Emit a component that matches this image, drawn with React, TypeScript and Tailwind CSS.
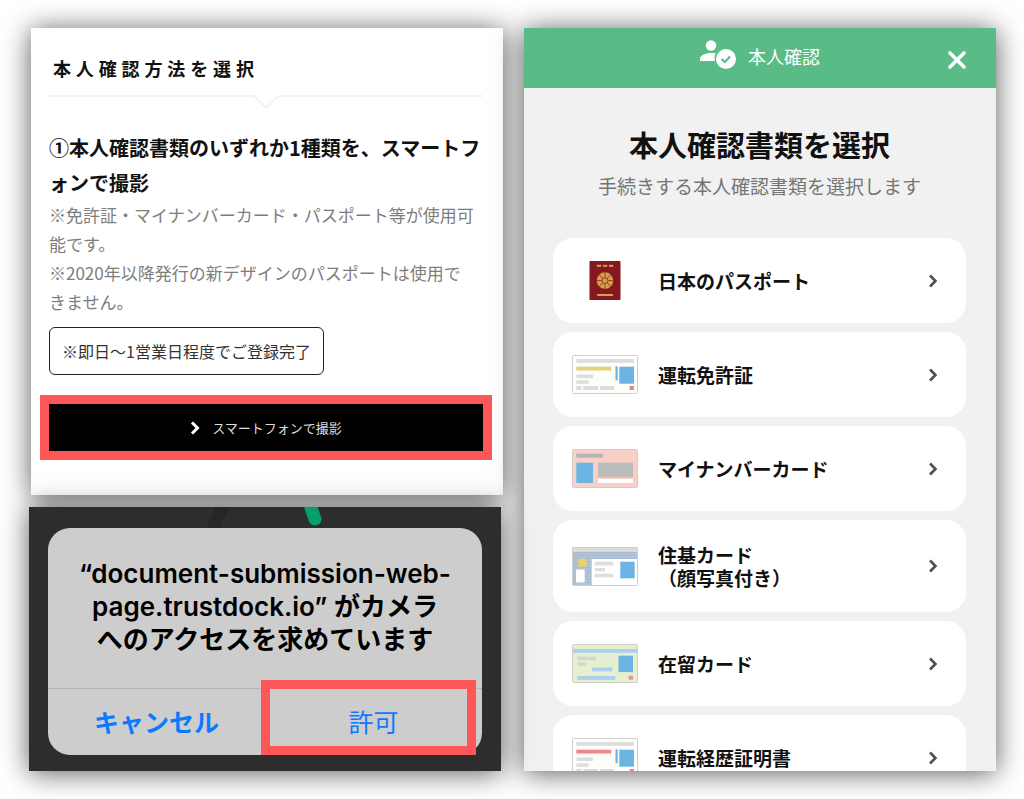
import type { ReactNode } from "react";

type TCardArt = { children: ReactNode; fill: string };

function CardArt({ children, fill }: TCardArt) {
  return (
    <svg
      viewBox="0 0 66 39"
      className="w-[66px] h-[39px] shrink-0"
      aria-hidden="true"
    >
      <rect x="0.5" y="0.5" width="65" height="38" rx="1" fill={fill} />
      {children}
      <rect
        x="0.5"
        y="0.5"
        width="65"
        height="38"
        rx="1"
        fill="none"
        stroke="#cfcfca"
      />
    </svg>
  );
}

function PassportArt() {
  const petals = [0, 45, 90, 135, 180, 225, 270, 315];
  return (
    <svg
      viewBox="0 0 66 39"
      className="w-[66px] h-[39px] shrink-0"
      aria-hidden="true"
    >
      <rect x="17.5" width="31" height="39" rx="0.8" fill="#84171f" />
      <g fill="#d3a04b">
        <rect x="24.7" y="3.8" width="4.6" height="2" />
        <rect x="31" y="3.8" width="4.3" height="2" />
        <rect x="37" y="3.8" width="4.4" height="2" />
        <rect x="24.9" y="33" width="16.4" height="2" rx="1" />
        <circle cx="33" cy="19.6" r="8.3" />
      </g>
      <g stroke="#84171f" strokeWidth="0.7" fill="none">
        <circle cx="33" cy="19.6" r="2.9" />
        {petals.map((angle) => (
          <path
            key={angle}
            d="M33 16.6V11"
            transform={`rotate(${angle} 33 19.6)`}
          />
        ))}
      </g>
    </svg>
  );
}

function LicenseArt({ accent }: { accent: string }) {
  return (
    <CardArt fill="#fdfdfa">
      <g fill="#dddddb">
        <rect x="4.3" y="4" width="57.5" height="3.8" />
        <rect x="4.3" y="19.5" width="16.7" height="3.5" />
        <rect x="4.3" y="25.3" width="12.3" height="3.5" />
        <rect x="4.3" y="31" width="5" height="4" />
        <rect x="11.3" y="31" width="14.7" height="4" />
        <rect x="28" y="31" width="14" height="4" />
      </g>
      <rect x="4.3" y="11.7" width="35" height="3.8" fill={accent} />
      <rect x="43.5" y="11.3" width="2.2" height="14" fill="#6cb4e2" />
      <rect x="47.3" y="11.7" width="14.7" height="17" fill="#6cb4e2" />
      <rect x="57.7" y="31" width="4.2" height="4" fill="#e98189" />
    </CardArt>
  );
}

function MyNumberArt() {
  return (
    <CardArt fill="#f9d0c8">
      <rect x="4.3" y="4.7" width="26.7" height="4" fill="#b5b5b5" />
      <rect x="4.3" y="13.7" width="16.7" height="20.3" fill="#6cb4e2" />
      <rect x="26" y="13.7" width="35" height="14.7" fill="#bbbbbb" />
      <rect x="26" y="30" width="35" height="4" fill="#fff" />
    </CardArt>
  );
}

function JukiArt() {
  const stripes = [7, 10, 13, 16, 19, 22, 25, 28, 31, 34, 37];
  return (
    <CardArt fill="#a6bdd5">
      {stripes.map((y) => (
        <path key={y} d={`M0 ${y}H66`} stroke="#b9c8d8" />
      ))}
      <rect width="66" height="5" fill="#dcdcd6" />
      <rect x="19.7" y="12" width="45.8" height="26.5" fill="#fff" />
      <rect x="6.3" y="11.7" width="8.3" height="8" fill="#ecd069" />
      <rect x="4" y="22.5" width="8.7" height="13" rx="1" fill="#fff" />
      <g fill="#dedede">
        <rect x="22.7" y="14.7" width="18.6" height="3.8" />
        <rect x="22.7" y="21" width="10.3" height="3.3" />
        <rect x="22.7" y="26.7" width="18.6" height="3.6" />
      </g>
      <rect x="48.3" y="14.7" width="14.4" height="16.6" fill="#6cb4e2" />
    </CardArt>
  );
}

function ResidenceArt() {
  return (
    <CardArt fill="#e4f0cf">
      <g fill="#abcfec">
        <rect y="5" width="66" height="3.8" />
        <rect x="20" y="23.5" width="20.3" height="3.8" />
        <rect x="5.3" y="32" width="38" height="3.8" />
      </g>
      <rect x="5.3" y="12.5" width="18.4" height="3.8" fill="#d3d9cc" />
      <rect x="5.3" y="18.4" width="9.4" height="3.6" fill="#d3d9cc" />
      <rect x="46.5" y="11.7" width="14.5" height="16.4" fill="#6cb4e2" />
      <rect x="56.7" y="31.7" width="4.3" height="4" fill="#e5959a" />
    </CardArt>
  );
}

const documents = [
  { id: 1, label: "日本のパスポート", art: <PassportArt /> },
  { id: 2, label: "運転免許証", art: <LicenseArt accent="#e3d27c" /> },
  { id: 3, label: "マイナンバーカード", art: <MyNumberArt /> },
  { id: 4, label: "住基カード", note: "（顔写真付き）", art: <JukiArt /> },
  { id: 5, label: "在留カード", art: <ResidenceArt /> },
  { id: 6, label: "運転経歴証明書", art: <LicenseArt accent="#f0868d" /> },
];

function Chevron({ className }: { className: string }) {
  return (
    <svg viewBox="0 0 10 14" className={className} aria-hidden="true">
      <path d="M2 1.5L7.5 7L2 12.5" fill="none" stroke="currentColor" />
    </svg>
  );
}

function MethodPanel() {
  return (
    <section className="ml-0.5 bg-white pl-[18px] pr-5 pt-6 pb-[35px] shadow-[0_2px_26px_rgba(0,0,0,0.65)]">
      <h2 className="pl-1 text-lg leading-8 font-bold tracking-[0.27em]">
        本人確認方法を選択
      </h2>
      <div className="flex mt-[11px]">
        <div className="flex-1 h-0.5 bg-[#eff5f5]" />
        <svg viewBox="0 0 28 14" className="w-7 h-3.5" aria-hidden="true">
          <path d="M0 1H1.5L14 12.5L26.5 1H28" fill="none" stroke="#eff5f5" strokeWidth="2" />
        </svg>
        <div className="flex-1 h-0.5 bg-[#eff5f5]" />
      </div>
      <h3 className="mt-[21px] text-xl leading-[35px] font-bold">
        ①本人確認書類のいずれか1種類を、スマートフォンで撮影
      </h3>
      <p className="text-[17px] leading-[29px] text-[#7d7d7d]">
        ※免許証・マイナンバーカード・パスポート等が使用可能です。
        <br />
        ※2020年以降発行の新デザインのパスポートは使用で
        <br />
        きません。
      </p>
      <p className="inline-block mt-[11px] px-3 py-[11px] border border-[#222] rounded-md text-base leading-6 text-[#333]">
        ※即日～1営業日程度でご登録完了
      </p>
      <div className="mt-5 -mx-[9px] border-[9px] border-[#fe5757]">
        <button
          type="button"
          className="flex items-center justify-center w-full gap-3 bg-black h-[47px] text-[13px] text-[#ddd]"
        >
          <Chevron className="w-2.5 h-3.5 text-white stroke-3" />
          スマートフォンで撮影
        </button>
      </div>
    </section>
  );
}

function CameraAlert() {
  return (
    <section className="relative flex-1 mr-0.5 bg-[#2d2d2d] px-[19px] pt-[21px] pb-4 shadow-[0_2px_26px_rgba(0,0,0,0.65)]">
      <svg
        viewBox="0 0 120 24"
        className="absolute top-0 w-[120px] h-6 left-[178px]"
        aria-hidden="true"
      >
        <path d="M6 24Q9 8 20 -4" fill="none" stroke="#262626" strokeWidth="12" />
        <path d="M102 -6Q105 4 108 12" fill="none" stroke="#049f6a" strokeWidth="13" strokeLinecap="round" />
      </svg>
      <div
        role="alertdialog"
        aria-labelledby="camera-title"
        className="relative flex flex-col h-full bg-[#cdcdcd] rounded-[22px]"
      >
        <p
          id="camera-title"
          className="flex-1 pt-[29px] text-[26px] leading-[33px] font-semibold text-center text-black font-['Inter','Noto_Sans_CJK_JP',sans-serif]"
        >
          “document-submission-web-
          <br />
          page.trustdock.io” がカメラ
          <br />
          へのアクセスを求めています
        </p>
        <div className="grid grid-cols-2 border-t border-[#b4b4b4] text-[25px] text-[#0a7aff]">
          <button type="button" className="font-bold h-[66px]">
            キャンセル
          </button>
          <div className="relative">
            <button type="button" className="w-full h-[66px]">
              許可
            </button>
            <span className="absolute -top-[9px] bottom-0 -left-1 right-1.5 border-[9px] border-[#fe5757] pointer-events-none" />
          </div>
        </div>
      </div>
    </section>
  );
}

function DocumentPanel() {
  return (
    <section className="min-h-0 overflow-hidden bg-[#f1f1f1]">
      <header className="relative flex items-center justify-center h-[60px] gap-3 bg-[#59bb85] text-white">
        <svg viewBox="0 0 36 29" className="mb-2 w-9 h-[29px]" aria-hidden="true">
          <circle cx="11" cy="5.5" r="5.2" fill="#fff" />
          <path d="M0 21V18.5C0 15 6 13 12 13H15.8C14.5 15.5 14.2 18.5 15 21Z" fill="#fff" />
          <circle cx="26" cy="19" r="10" fill="#fff" />
          <path d="M21.5 19L24.8 22L30 16.5" fill="none" stroke="#59bb85" strokeWidth="2" />
        </svg>
        <span className="pb-1 text-lg">本人確認</span>
        <button
          type="button"
          aria-label="閉じる"
          className="absolute right-[29px] top-[22px]"
        >
          <svg viewBox="0 0 20 20" className="w-5 h-5" aria-hidden="true">
            <path d="M3 3L17 17M17 3L3 17" stroke="#fff" strokeWidth="3.6" strokeLinecap="round" />
          </svg>
        </button>
      </header>
      <div className="pl-[29px] pr-[30px] pt-9">
        <h1 className="text-[29px] leading-10 font-bold text-center">
          本人確認書類を選択
        </h1>
        <p className="mt-2 text-[19px] leading-7 text-center text-[#757575]">
          手続きする本人確認書類を選択します
        </p>
        <ul className="flex flex-col mt-[38px] gap-[9px]">
          {documents.map((item) => (
            <li key={item.id}>
              <button
                type="button"
                className="flex items-center w-full min-h-[85px] gap-5 pl-[19px] pr-7 py-[23px] text-left bg-white rounded-[20px]"
              >
                {item.art}
                <span className="flex-1 text-[19px] leading-[23px] font-bold text-[#111]">
                  {item.label}
                  {item.note && <span className="block">{item.note}</span>}
                </span>
                <Chevron className="w-2.5 h-3.5 text-[#505050] stroke-[2.6px]" />
              </button>
            </li>
          ))}
        </ul>
      </div>
    </section>
  );
}

function App() {
  return (
    <main
      lang="ja"
      className="grid h-screen grid-cols-2 grid-rows-1 gap-[21px] overflow-hidden bg-white py-7 pl-[31px] pr-7 text-[#111] font-['Noto_Sans_CJK_JP',sans-serif]"
    >
      <div className="flex flex-col min-h-0 gap-3 -ml-0.5">
        <MethodPanel />
        <CameraAlert />
      </div>
      <div className="grid min-h-0 grid-rows-1 shadow-[0_2px_26px_rgba(0,0,0,0.65)]">
        <DocumentPanel />
      </div>
    </main>
  );
}

export default App;
